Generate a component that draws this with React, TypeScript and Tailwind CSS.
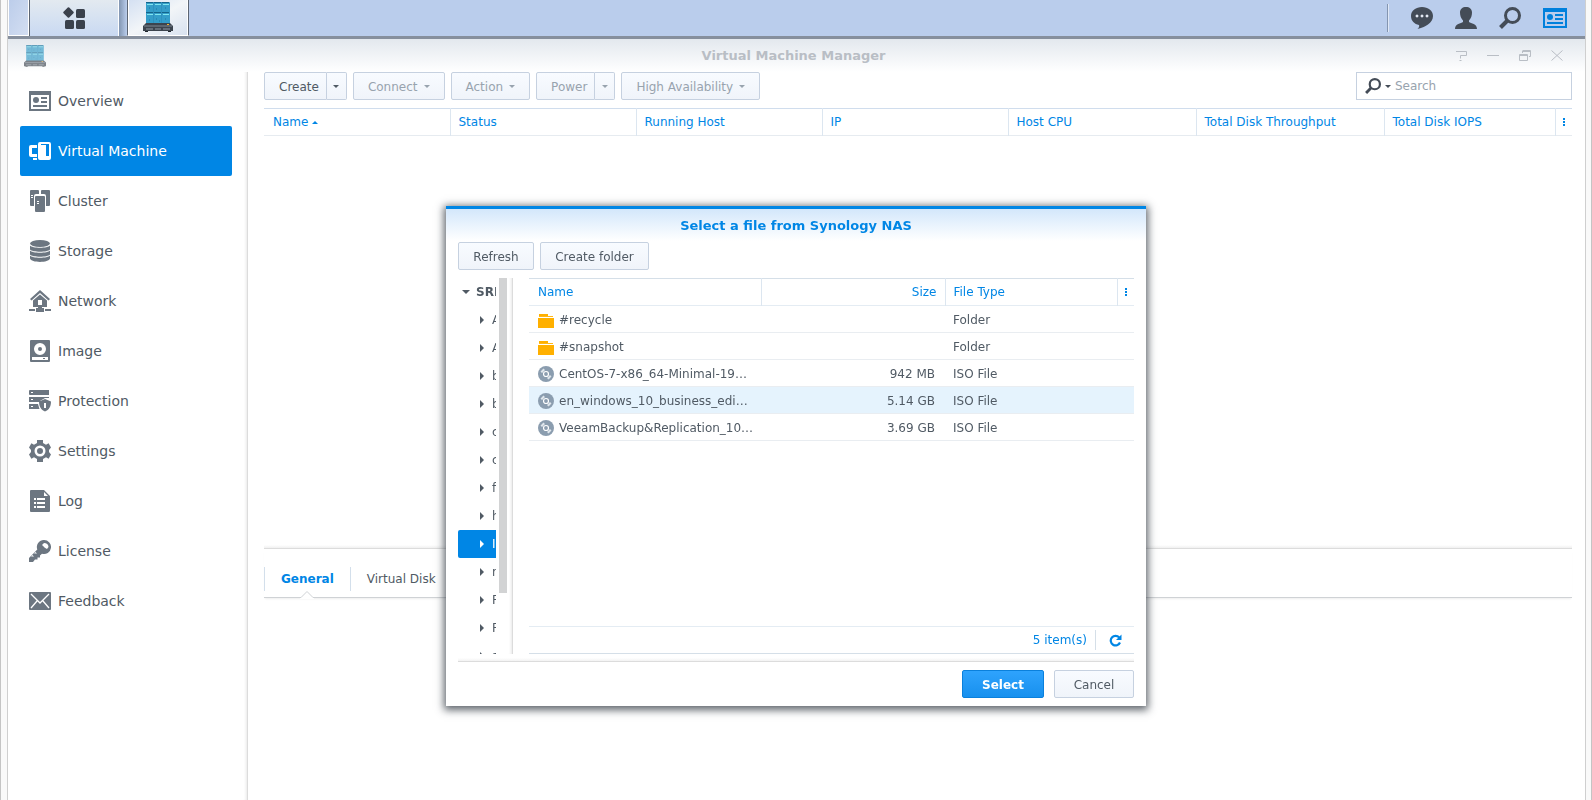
import { useState, type ReactNode } from 'react';

const ACCENT = '#0086e5';

function StackIcon({ className }: { className: string }) {
  return (
    <svg viewBox="0 0 30 30" className={className} aria-hidden="true">
      <rect x="3" y="0" width="24" height="23" rx="1" fill="#349dc9" />
      {[3, 11, 19].map((x) => (
        <g key={x}>
          <rect x={x} y="0" width="7" height="1" fill="#14658c" />
          <rect x={x + 1} y="2" width="6" height="1" fill="#7fe6ef" />
          <rect x={x} y="10" width="7" height="1" fill="#14658c" />
          <rect x={x + 1} y="12" width="6" height="1" fill="#7fe6ef" />
        </g>
      ))}
      <path d="M10.500 0v21M18.500 0v21" stroke="#2e91be" />
      <path d="M6 6h1M13 7h1M22 6h1M13 17h1M16 19h1M22 17h1M6 18h1" stroke="#1c75a0" />
      <path d="M3 21h24l3 3v5H0v-5z" fill="#3c444e" />
      <path d="M1 24h28" stroke="#7d8792" />
      <path d="M3 27h7M12 27h6M20 27h7" stroke="#8d97a2" />
      <rect x="24" y="22" width="2" height="1" fill="#f0b62c" />
      <path d="M2 29.500h3M25 29.500h3" stroke="#20262d" />
    </svg>
  );
}

function Caret({ up = false }: { up?: boolean }) {
  return (
    <svg viewBox="0 0 6 3" className="h-[3px] w-[6px] shrink-0" fill="currentColor" aria-hidden="true">
      <path d={up ? 'M0 3L3 0L6 3z' : 'M0 0h6L3 3z'} />
    </svg>
  );
}

function SearchIcon({ className }: { className: string }) {
  return (
    <svg viewBox="0 0 22 22" className={className} fill="none" stroke="currentColor" aria-hidden="true">
      <circle cx="13.500" cy="8.500" r="7" strokeWidth="3" />
      <path d="M8.500 13.500L1.500 20.500" strokeWidth="4" />
    </svg>
  );
}

function NewsIcon({ className }: { className: string }) {
  return (
    <svg viewBox="0 0 24 20" className={className} aria-hidden="true">
      <rect x="1" y="1" width="22" height="18" fill="none" stroke="currentColor" strokeWidth="2" />
      <rect x="0" y="0" width="24" height="4" fill="currentColor" />
      <circle cx="7" cy="9" r="3" fill="currentColor" />
      <path d="M12 7h8M12 11h8M4 15h16" stroke="currentColor" strokeWidth="2" />
    </svg>
  );
}

function NavIcon({ children }: { children: ReactNode }) {
  return (
    <svg viewBox="0 0 22 22" className="size-[22px] shrink-0" fill="currentColor" aria-hidden="true">
      {children}
    </svg>
  );
}

const NAV: { label: string; icon: ReactNode }[] = [
  {
    label: 'Overview',
    icon: (
      <>
        <path d="M0 1h22v20H0zM2 5v14h18V5z" fillRule="evenodd" />
        <circle cx="7" cy="10" r="3" />
        <path d="M12 7h6v2h-6zM12 11h6v2h-6zM4 15h14v2H4z" />
      </>
    ),
  },
  {
    label: 'Virtual Machine',
    icon: (
      <>
        <path d="M2 5h6v3H3v6h5v3H2a2 2 0 0 1-2-2V7a2 2 0 0 1 2-2zM4 18h4v2H4z" />
        <path d="M11 2h9a2 2 0 0 1 2 2v14a2 2 0 0 1-2 2h-9a2 2 0 0 1-2-2V4a2 2 0 0 1 2-2zM12 4v1h5v11h3V4z" fillRule="evenodd" />
      </>
    ),
  },
  {
    label: 'Cluster',
    icon: (
      <>
        <path d="M2 0h7a1 1 0 0 1 1 1v3H7a2 2 0 0 0-2 2v10H2a1 1 0 0 1-1-1V1a1 1 0 0 1 1-1zM2 5v1h2V5zM2 7v1h2V7z" fillRule="evenodd" />
        <path d="M13 0h7a1 1 0 0 1 1 1v14a1 1 0 0 1-1 1h-3V6a2 2 0 0 0-2-2h-3V1a1 1 0 0 1 1-1z" />
        <path d="M7 6h8a1 1 0 0 1 1 1v14a1 1 0 0 1-1 1H7a1 1 0 0 1-1-1V7a1 1 0 0 1 1-1zM8 11v1h2v-1zM8 13v1h2v-1z" fillRule="evenodd" />
      </>
    ),
  },
  {
    label: 'Storage',
    icon: (
      <>
        <ellipse cx="11" cy="3.500" rx="10" ry="3.500" />
        <path d="M1 5.500c2 3 18 3 20 0v4c-2 3-18 3-20 0z" />
        <path d="M1 10.500c2 3 18 3 20 0v4c-2 3-18 3-20 0z" />
        <path d="M1 15.500c2 3 18 3 20 0v3c-1 4.500-19 4.500-20 0z" />
      </>
    ),
  },
  {
    label: 'Network',
    icon: (
      <>
        <path d="M11 0L21 9l-1.500 1.500L11 3l-8.500 7.500L1 9z" />
        <path d="M11 4.500l7 6V17H4v-6.500zM9 10v5h4v-5z" fillRule="evenodd" />
        <path d="M0 19h6v2H0zM16 19h6v2h-6zM7 18h2v-1h4v1h2v4H7z" />
      </>
    ),
  },
  {
    label: 'Image',
    icon: (
      <>
        <path
          d="M2 0h18a1 1 0 0 1 1 1v20a1 1 0 0 1-1 1H2a1 1 0 0 1-1-1V1a1 1 0 0 1 1-1zM11 3a6 6 0 1 0 0 12a6 6 0 1 0 0-12zM3 17v3h16v-3z"
          fillRule="evenodd"
        />
        <circle cx="11" cy="9" r="2" />
        <path d="M14 18h2v1h-2z" />
      </>
    ),
  },
  {
    label: 'Protection',
    icon: (
      <>
        <path d="M1 0h19v5H1a1 1 0 0 1-1-1V1a1 1 0 0 1 1-1zM2 2v1h2V2z" fillRule="evenodd" />
        <path d="M0 7h20v1l-4 0-5 3v1H0zM2 9v1h2V9z" fillRule="evenodd" />
        <path d="M0 14h9l1.500 5H0zM2 16v1h2v-1z" fillRule="evenodd" />
        <path d="M16 9l6 2.500c0 5-2 8.500-6 10-4-1.500-6-5-6-10zM15 13v5h2v-5z" fillRule="evenodd" />
      </>
    ),
  },
  {
    label: 'Settings',
    icon: (
      <path
        d="M8 0h6v3l3 1.700 2.600-1.500L22 7.500 20 10v2l2 2.500-2.400 4.300L17 17.300 14 19v3H8v-3l-3-1.700-2.600 1.500L0 14.500 2 12v-2L0 7.500l2.400-4.300L5 4.700 8 3zM11 5.500a5.500 5.500 0 1 0 0 11a5.500 5.500 0 1 0 0-11zM11 8a3 3 0 1 1 0 6a3 3 0 1 1 0-6z"
      />
    ),
  },
  {
    label: 'Log',
    icon: (
      <path
        d="M2 0h13l6 6v15a1 1 0 0 1-1 1H2a1 1 0 0 1-1-1V1a1 1 0 0 1 1-1zM15 2v4h4zM5 8v2h2V8zM8 8v2h8V8zM5 12v2h2v-2zM8 12v2h8v-2zM5 16v2h2v-2zM8 16v2h8v-2z"
        fillRule="evenodd"
      />
    ),
  },
  {
    label: 'License',
    icon: (
      <path
        d="M15 0a7 7 0 1 1-2 13.700L11 15.500v2H8.500v2H6L4 22H0v-4L8.300 9.500A7 7 0 0 1 15 0zM15 3l-2 2c2 2 3 3 5 4l1.500-2c0-2.500-2-4-4.500-4zM2 16.500L3.500 15 5 16.500zM5 13.500L6.500 12 8 13.500z"
        fillRule="evenodd"
      />
    ),
  },
  {
    label: 'Feedback',
    icon: (
      <>
        <rect x="0" y="2" width="22" height="18" rx="1" />
        <path d="M2 4l9 9 9-9M2 18l6-7M20 18l-6-7" fill="none" stroke="#fff" strokeWidth="1.300" />
      </>
    ),
  },
];

const FOLDERS = ['A', 'A', 'b', 'b', 'c', 'c', 'f', 'h', 'I', 'n', 'P', 'P', 's'];

const FILES = [
  { name: '#recycle', size: '', type: 'Folder' },
  { name: '#snapshot', size: '', type: 'Folder' },
  { name: 'CentOS-7-x86_64-Minimal-19…', size: '942 MB', type: 'ISO File' },
  { name: 'en_windows_10_business_edi…', size: '5.14 GB', type: 'ISO File' },
  { name: 'VeeamBackup&Replication_10…', size: '3.69 GB', type: 'ISO File' },
];

const VM_COLUMNS = ['Name', 'Status', 'Running Host', 'IP', 'Host CPU', 'Total Disk Throughput', 'Total Disk IOPS'];

const button =
  'flex h-7 items-center justify-center rounded-xs border border-[#c6d1e0] bg-linear-to-b from-[#f8fbff] to-[#f0f4fa] pt-px text-[#505a64] disabled:text-[#98a3ae]';

function SplitButton({ label, disabled = false }: { label: string; disabled?: boolean }) {
  return (
    <div className="flex">
      <button type="button" disabled={disabled} className={`${button} rounded-r-none pr-[7px] pl-[14px]`}>
        {label}
      </button>
      <button type="button" disabled={disabled} aria-label={`${label} options`} className={`${button} w-5 rounded-l-none border-l-0`}>
        <Caret />
      </button>
    </div>
  );
}

function MenuButton({ label }: { label: string }) {
  return (
    <button type="button" disabled className={`${button} gap-[6px] px-[14px]`}>
      {label}
      <Caret />
    </button>
  );
}

function Dots() {
  return (
    <svg viewBox="0 0 2 8" className="h-2 w-[2px]" fill="currentColor" aria-hidden="true">
      <path d="M0 0h2v2H0zM0 3h2v2H0zM0 6h2v2H0z" />
    </svg>
  );
}

function Taskbar() {
  return (
    <header className="flex h-[39px] items-stretch border-b-[3px] border-[#868f9d] bg-[#bacdec]">
      <div className="w-[21px] border-x border-b border-white bg-linear-to-br from-[#bccdea] to-[#d3def2]" />
      <button
        type="button"
        aria-label="Main menu"
        className="flex w-[90px] items-center justify-center border-x border-l-[#5c6573] border-r-white bg-linear-to-b from-[#e3eaf0] to-[#c9d9f2] text-[#3a414c]"
      >
        <svg viewBox="0 0 22 22" className="size-[22px]" fill="currentColor" aria-hidden="true">
          <rect x="1.500" y="1.500" width="8" height="8" rx="1" transform="rotate(45 5.500 5.500)" />
          <rect x="13" y="2" width="9" height="9" rx="1.500" />
          <rect x="2" y="13" width="9" height="9" rx="1.500" />
          <rect x="13" y="13" width="9" height="9" rx="1.500" />
        </svg>
      </button>
      <div className="w-2 bg-linear-to-r from-[#8296b2] to-[#bacdec]" />
      <button
        type="button"
        aria-label="Virtual Machine Manager"
        className="flex w-[62px] items-start justify-center border border-t-0 border-x-[#5c6573] border-b-white bg-linear-to-br from-[#d4e0f2] via-[#f2f5f8] to-[#d8e2f0] pt-[2px] shadow-[inset_1px_0_#fff,inset_-1px_0_#fff]"
      >
        <StackIcon className="size-[30px]" />
      </button>
      <div className="ml-auto flex items-center gap-[22px] pr-[18px] text-[#444c57]">
        <div className="h-7 w-[2px] border-r border-[#dfe8f6] bg-[#8495b0]" />
        <button type="button" aria-label="Chat">
          <svg viewBox="0 0 22 22" className="size-[22px]" aria-hidden="true">
            <path
              d="M11 0c6 0 11 3.500 11 9 0 3.500-2 6.500-5 8.500-2.500 1.600-5.500 3.500-10.500 4.500 1.500-1.200 2-2.800 1.500-4C3.500 17 0 14 0 9 0 3.500 5 0 11 0z"
              fill="currentColor"
            />
            <path d="M5 8h2v2H5zM10 8h2v2h-2zM15 8h2v2h-2z" fill="#e4eaf3" stroke="#e4eaf3" strokeWidth=".6" />
          </svg>
        </button>
        <button type="button" aria-label="User">
          <svg viewBox="0 0 22 22" className="size-[22px]" fill="currentColor" aria-hidden="true">
            <path d="M11 0c3.500 0 6 2 6 5.500 0 3-1 6-3 8V15c2 1.500 8 1.500 8 7H0c0-5.500 6-5.500 8-7v-1.500c-2-2-3-5-3-8C5 2 7.500 0 11 0z" />
          </svg>
        </button>
        <button type="button" aria-label="Find">
          <SearchIcon className="size-[22px]" />
        </button>
        <button type="button" aria-label="Widgets" className="text-[#0080dc]">
          <NewsIcon className="h-5 w-6" />
        </button>
      </div>
    </header>
  );
}

function TitleBar() {
  return (
    <div className="flex h-[33px] items-center justify-between bg-linear-to-b from-[#e3e8ee] to-white px-4 text-[#b9bec5]">
      <div className="flex-1">
        <StackIcon className="size-[22px] opacity-65" />
      </div>
      <h1 className="text-[13px] leading-4 font-bold">Virtual Machine Manager</h1>
      <div className="flex flex-1 items-center justify-end gap-5 pr-[6px]">
        {[
          { label: 'Help', d: 'M1 1.500h10.500v4H5.500v3M4.500 10.500h2' },
          { label: 'Minimize', d: 'M0 5.500h12' },
          { label: 'Restore', d: 'M.5 4.500h8v6h-8zM.5 5.500h8M3.500 3V1M3.500 .5h8v6H10M3.500 1.500h8' },
          { label: 'Close', d: 'M.5 .5l11 10M11.500 .5l-11 10' },
        ].map((c) => (
          <button key={c.label} type="button" aria-label={c.label}>
            <svg viewBox="0 0 12 12" className="size-3" fill="none" stroke="currentColor" aria-hidden="true">
              <path d={c.d} />
            </svg>
          </button>
        ))}
      </div>
    </div>
  );
}

function Sidebar() {
  const [active, setActive] = useState('Virtual Machine');

  return (
    <nav className="w-60 shrink-0 border-r border-[#dcdcdc] pt-1 pr-[15px] pl-3 shadow-[inset_-3px_0_3px_-2px_#e8e8e8]">
      {NAV.map(({ label, icon }) => (
        <a
          key={label}
          href="#"
          onClick={() => setActive(label)}
          className={
            label === active
              ? 'flex h-[50px] items-center gap-[7px] rounded-xs bg-[#0086e5] px-[9px] text-sm text-white'
              : 'flex h-[50px] items-center gap-[7px] px-[9px] text-sm text-[#6c7681]'
          }
        >
          <NavIcon>{icon}</NavIcon>
          <span className={label === active ? '' : 'text-[#505a64]'}>{label}</span>
        </a>
      ))}
    </nav>
  );
}

function FileIcon({ folder }: { folder: boolean }) {
  if (folder) {
    return (
      <svg viewBox="0 0 16 16" className="size-4 shrink-0" fill="#ffb000" aria-hidden="true">
        <path d="M1 2h9v2h5v1H1z" fillOpacity=".9" />
        <path d="M0 6h16v10H0zM1 2h9v2H1z" />
      </svg>
    );
  }
  return (
    <svg viewBox="0 0 16 16" className="size-4 shrink-0" fill="none" aria-hidden="true">
      <circle cx="8" cy="8" r="8" fill="#8b9daf" />
      <circle cx="8" cy="8" r="2.500" stroke="#fff" strokeWidth="1.200" />
      <path d="M2.500 5.500L5.500 2.500L7 4L4 7zM13.500 10.500L10.500 13.500L9 12L12 9z" fill="#dfe6ec" />
    </svg>
  );
}

function FolderTree() {
  const [selected, setSelected] = useState(8);

  return (
    <div className="flex w-[55px] shrink-0 gap-[3px] overflow-hidden border-r border-[#dcdcdc] shadow-[inset_-3px_0_3px_-2px_#e8e8e8]">
      <ul className="w-[38px] overflow-hidden">
        <li className="flex h-7 items-center gap-[6px] pl-1 font-bold">
          <svg viewBox="0 0 8 4" className="h-1 w-2 shrink-0" fill="currentColor" aria-hidden="true">
            <path d="M0 0h8L4 4z" />
          </svg>
          SRI
        </li>
        {FOLDERS.map((name, i) => (
          <li key={i}>
            <button
              type="button"
              onClick={() => setSelected(i)}
              className={
                i === selected
                  ? 'flex h-7 w-12 items-center gap-2 rounded-xs bg-[#0086e5] pl-[22px] text-white'
                  : 'flex h-7 w-12 items-center gap-2 pl-[22px]'
              }
            >
              <svg viewBox="0 0 4 8" className="h-2 w-1 shrink-0" fill="currentColor" aria-hidden="true">
                <path d="M0 0l4 4-4 4z" />
              </svg>
              {name}
            </button>
          </li>
        ))}
      </ul>
      <div className="h-[315px] w-2 bg-[#d2d3d4]" />
    </div>
  );
}

function FileDialog() {
  const [picked, setPicked] = useState(3);

  return (
    <div className="fixed inset-0 flex items-center justify-center pt-28">
      <section
        role="dialog"
        aria-labelledby="dialog-title"
        className="flex w-[700px] max-w-full flex-col border-t-[3px] border-[#0086e5] bg-white bg-linear-to-b from-[#d3e7fb] to-white to-[32px] px-3 pb-2 shadow-[0_2px_8px_2px_rgba(40,48,58,0.75)]"
      >
        <h2 id="dialog-title" className="py-2 text-center text-[13px] leading-[17px] font-bold text-[#0086e5]">
          Select a file from Synology NAS
        </h2>
        <div className="flex gap-[6px]">
          <button type="button" className={`${button} w-[76px]`}>
            Refresh
          </button>
          <button type="button" className={`${button} w-[109px]`}>
            Create folder
          </button>
        </div>

        <div className="mt-2 flex h-[376px] gap-4">
          <FolderTree />
          <div className="flex flex-1 flex-col border-b border-[#d5dfe8]">
            <table className="w-full table-fixed border-collapse">
              <colgroup>
                <col className="w-[232px]" />
                <col className="w-[184px]" />
                <col className="w-[172px]" />
                <col className="w-[17px]" />
              </colgroup>
              <thead>
                <tr className="h-[27px] border-t border-b border-t-[#d5dfe8] border-b-[#e4ecf3] text-left text-[#0086e5]">
                  <th className="border-r border-[#dce6f0] px-[9px] font-normal">Name</th>
                  <th className="border-r border-[#dce6f0] px-2 text-right font-normal">Size</th>
                  <th className="border-r border-[#dce6f0] px-2 font-normal">File Type</th>
                  <th aria-label="Columns" className="pl-[7px]">
                    <Dots />
                  </th>
                </tr>
              </thead>
              <tbody>
                {FILES.map((file, i) => (
                  <tr
                    key={file.name}
                    onClick={() => setPicked(i)}
                    className={i === picked ? 'h-[27px] border-b border-[#e9edf1] bg-[#e5f3fd]' : 'h-[27px] border-b border-[#e9edf1]'}
                  >
                    <td className="pt-[2px] pl-[9px]">
                      <div className="flex items-center gap-[5px] whitespace-nowrap">
                        <FileIcon folder={file.type === 'Folder'} />
                        {file.name}
                      </div>
                    </td>
                    <td className="pt-[2px] pr-[10px] text-right">{file.size}</td>
                    <td className="pt-[2px] pl-2">{file.type}</td>
                    <td />
                  </tr>
                ))}
              </tbody>
            </table>
            <div className="mt-auto flex h-[27px] items-center justify-end border-t border-[#e4ecf3] text-[#0086e5]">
              <span>5 item(s)</span>
              <div className="ml-2 h-5 w-px bg-[#d5dfe8]" />
              <button type="button" aria-label="Reload list" className="mr-3 ml-[13px]">
                <svg viewBox="0 0 13 13" className="size-[13px]" aria-hidden="true">
                  <path d="M10.200 3.500A4.800 4.800 0 1 0 11 8.500" fill="none" stroke={ACCENT} strokeWidth="2.200" />
                  <path d="M12.500 .5v5.500H7z" fill={ACCENT} />
                </svg>
              </button>
            </div>
          </div>
        </div>

        <div className="mt-1 h-1 border-b border-[#dcdcdc] bg-linear-to-b from-white to-[#f2f2f2]" />
        <div className="mt-2 flex justify-end gap-[10px]">
          <button
            type="button"
            className="h-7 w-[82px] rounded-xs border border-[#0a80dc] bg-linear-to-b from-[#2ea3fd] to-[#1690ee] pt-px font-bold text-white"
          >
            Select
          </button>
          <button type="button" className={`${button} w-20`}>
            Cancel
          </button>
        </div>
      </section>
    </div>
  );
}

export default function App() {
  return (
    <div className="flex min-h-screen border-x border-[#c4c4c4] bg-[#f9f9f9] px-[6px] font-['DejaVu_Sans',Verdana,sans-serif] text-xs text-[#505a64]">
      <div className="flex flex-1 flex-col border-x border-[#cfcfcf] bg-white">
        <Taskbar />
        <TitleBar />
        <div className="flex flex-1">
          <Sidebar />
          <main className="flex flex-1 flex-col pr-[13px] pl-4">
            <div className="flex items-center gap-[6px]">
              <SplitButton label="Create" />
              <MenuButton label="Connect" />
              <MenuButton label="Action" />
              <SplitButton label="Power" disabled />
              <MenuButton label="High Availability" />
              <label className="ml-auto flex h-7 w-[216px] items-center border border-[#c6d1e0] pl-2 text-[#444c57]">
                <SearchIcon className="size-4" />
                <span className="pr-1 pl-1">
                  <Caret />
                </span>
                <input type="text" placeholder="Search" aria-label="Search" className="min-w-0 flex-1 outline-none placeholder:text-[#98a3ae]" />
              </label>
            </div>

            <table className="mt-2 w-full table-fixed border-collapse">
              <colgroup>
                <col className="w-[186px]" />
                <col className="w-[186px]" />
                <col className="w-[186px]" />
                <col className="w-[186px]" />
                <col className="w-[188px]" />
                <col className="w-[188px]" />
                <col className="w-[171px]" />
                <col className="w-[17px]" />
              </colgroup>
              <thead>
                <tr className="h-[27px] border-t border-b border-t-[#d0dded] border-b-[#e6ebf0] text-left text-[#0086e5]">
                  {VM_COLUMNS.map((column) => (
                    <th key={column} className="border-r border-[#dce6f0] px-2 font-normal first:pl-[9px]">
                      <div className="flex items-center gap-1">
                        {column}
                        {column === 'Name' && <Caret up />}
                      </div>
                    </th>
                  ))}
                  <th aria-label="Columns" className="pl-[7px]">
                    <Dots />
                  </th>
                </tr>
              </thead>
            </table>

            <div className="mt-auto h-1 border-b border-[#dcdcdc] bg-linear-to-b from-white to-[#f0f0f0]" />
            <section className="h-[251px]">
              <div className="flex h-[49px] items-end border-b border-[#cfd2d5] pb-[6px] shadow-[0_2px_2px_-1px_#eeeeee]">
                <button type="button" className="relative h-6 border-x border-[#d3dfeb] px-4 font-bold text-[#0086e5]">
                  General
                  <svg viewBox="0 0 14 8" className="absolute top-full left-1/2 h-2 w-[14px] -translate-x-1/2" aria-hidden="true">
                    <path d="M0 6.500h1L7 .5l6 6h1V8H0z" fill="#fff" />
                    <path d="M0 6.500h1L7 .5l6 6h1" fill="none" stroke="#cfd2d5" />
                  </svg>
                </button>
                <button type="button" className="h-6 px-4">
                  Virtual Disk
                </button>
              </div>
            </section>
          </main>
        </div>
      </div>
      <FileDialog />
    </div>
  );
}
